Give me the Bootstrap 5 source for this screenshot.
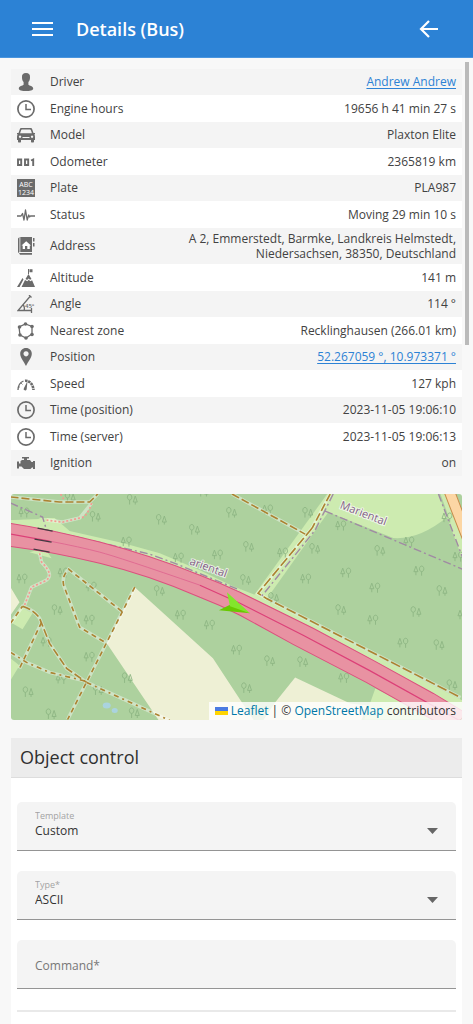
<!DOCTYPE html>
<html lang="en">
<head>
<meta charset="utf-8">
<meta name="viewport" content="width=device-width, initial-scale=1">
<title>Details (Bus)</title>
<link href="https://cdn.jsdelivr.net/npm/bootstrap@5.3.0/dist/css/bootstrap.min.css" rel="stylesheet">
<style>
  body { font-family: "Open Sans", sans-serif; font-size: 12px; line-height: 15px; color: #424242; background: #f8f8f8; }
  .topbar { height: 58px; background: #2c82d5; border-bottom: 1px solid #4a95de; padding: 0 32px; }
  .topbar h1 { font-size: 18px; line-height: 24px; font-weight: 600; padding-left: 23px; }
  .icon-btn { line-height: 0; }
  .scroller { scrollbar-width: none; padding: 11px 11px 0; }
  .scroller::-webkit-scrollbar { display: none; }
  .thumb { width: 4px; height: 283px; right: 4px; top: 4px; background: #bababa; }
  .facts tr { height: 26px; background: #f4f4f4; }
  .facts tr:nth-child(even) { height: 27px; background: #fff; }
  .facts tr.tall { height: 36px; }
  .facts td, .facts th { padding: 0 0 1px; font-weight: 400; vertical-align: middle; }
  .facts th { width: 128px; padding-left: 39px; position: relative; white-space: nowrap; }
  .facts th svg { position: absolute; left: 6px; top: 50%; transform: translateY(-50%); width: 18px; height: 18px; fill: #6b6b6b; }
  .facts td { padding-right: 6px; text-align: right; }
  .facts .line { fill: none; stroke: #6b6b6b; }
  .facts a { color: #2c82d5; text-underline-offset: 2px; }
  .map { aspect-ratio: 2 / 1; border-radius: 3px; margin-top: 18px; background: #add19e; }
  .credit { background: rgba(255,255,255,.8); padding: 1px 6px 2px 6px; color: #333; }
  .credit a { color: #0078a8; text-decoration: none; }
  .panel { margin-top: 18px; background: #fff; }
  .panel h2 { font-size: 18px; line-height: 24px; font-weight: 400; color: #303030; background: #ececec; border-bottom: 1px solid #ddd; padding: 7px 9px 8px; }
  .fields { padding: 24px 6px 21px; }
  .stack { gap: 20px; }
  .field .form-control, .field .form-select {
    height: 49px; min-height: 49px; font-size: 12px; line-height: 16px; color: #333; padding: 21px 18px 10px;
    background-color: #f4f4f4; border: 0; border-bottom: 1px solid #949494; border-radius: 5px 5px 0 0; }
  .field .form-select {
    background-image: url("data:image/svg+xml,%3Csvg xmlns='http://www.w3.org/2000/svg' viewBox='0 0 11 6'%3E%3Cpath d='M0 0h11L5.5 6z' fill='%23666'/%3E%3C/svg%3E");
    background-size: 11px 6px; background-position: right 18px top 26px; }
  .field > label { font-size: 9px; line-height: 12px; height: auto; padding: 7px 17px; color: #777; opacity: 1; transform: none !important; }
  .field > .form-control:placeholder-shown ~ label { font-size: 12px; line-height: 16px; padding-top: 17px; }
  .field > label::after { background: none !important; }
  .rule { border-top: 2px solid #e9e9e9; opacity: 1; margin-top: 21px; }
</style>
</head>
<body class="vh-100 d-flex flex-column overflow-hidden">
<header class="topbar d-flex align-items-center flex-shrink-0 text-white">
  <button type="button" class="icon-btn btn p-0 border-0" aria-label="Menu">
    <svg width="21" height="16" viewBox="0 0 21 16" stroke="#fff" stroke-width="2"><path d="M0 2h21M0 8h21M0 14h21"/></svg>
  </button>
  <h1 class="mb-0 flex-grow-1">Details (Bus)</h1>
  <button type="button" class="icon-btn btn p-0 border-0" aria-label="Back">
    <svg width="24" height="20" viewBox="0 0 24 20" fill="none" stroke="#fff" stroke-width="2.2"><path d="M21 10H4M12 2L4 10l8 8"/></svg>
  </button>
</header>

<svg class="d-none">
  <symbol id="clock" viewBox="0 0 18 18"><circle cx="9" cy="9" r="8.100" stroke-width="1.700" fill="none" stroke="#6b6b6b"/><path d="M9 4v5.600h5" stroke-width="1.500" fill="none" stroke="#6b6b6b"/></symbol>
  <symbol id="trees" viewBox="0 0 11 11" overflow="visible"><path d="M2.500 1L.5 6.500h4zM2.500 6.500V10M8.200 6.500V10.500M8.200 6.500a2.200 2.800 0 1 1 .1 0" fill="none" stroke="#8db583" stroke-width=".9"/></symbol>
  <symbol id="treesr" viewBox="0 0 11 11" overflow="visible"><path d="M8.500 2l-2 6h4zM8.500 8v2.500M2.800 6v4.500M2.800 6a2.200 2.800 0 1 1 .1 0" fill="none" stroke="#8db583" stroke-width=".9"/></symbol>
</svg>

<div class="position-relative flex-grow-1 overflow-hidden d-flex flex-column">
<main class="scroller flex-grow-1 overflow-auto d-flex flex-column">
  <table class="facts w-100 flex-shrink-0">
    <tbody>
    <tr><th scope="row"><svg viewBox="0 0 18 18"><path d="M9 0c3 0 4.300 1.500 4 4.500 0 2-.7 3.500-1.600 4.600v2.700c1 .9 4.800 1.400 4.800 3.700 0 2.300-3.500 2.500-7.200 2.500s-7.200-.2-7.200-2.500c0-2.300 3.800-2.800 4.800-3.700V9.100C5.700 8 5 6.500 5 4.500 4.700 1.500 6 0 9 0z"/></svg>Driver</th><td><a href="#">Andrew Andrew</a></td></tr>
    <tr><th scope="row"><svg><use href="#clock"/></svg>Engine hours</th><td>19656 h 41 min 27 s</td></tr>
    <tr><th scope="row"><svg viewBox="0 0 18 18"><path fill-rule="evenodd" d="M4.500 2h9c1 0 1.400.4 1.700 1.200L16.500 7H18v1l-.6.500c.5.7.6 1.500.6 2.500v3h-1v1.500c0 .7-.4 1-1 1h-1c-.7 0-1-.3-1-1V14H4v1.500c0 .7-.3 1-1 1H2c-.6 0-1-.3-1-1V14H0v-3c0-1 .1-1.800.6-2.500L0 8V7h1.500l1.300-3.800C3.100 2.400 3.500 2 4.500 2zM5 3.500c-.5 0-.7.2-.9.7L3.100 7.300h11.800l-1-3.100c-.2-.5-.4-.7-.9-.7zM3 9.500a1.200 1.200 0 1 0 .1 0zM15 9.500a1.200 1.200 0 1 0 .1 0zM5.500 11h7v1h-7z"/></svg>Model</th><td>Plaxton Elite</td></tr>
    <tr><th scope="row"><svg viewBox="0 0 18 18"><path class="line" stroke-width="1.900" d="M1 6.500h3.200v5.500H1zM8 6.500h3.200v5.500H8zM14 7.500l2.200-1V13"/></svg>Odometer</th><td>2365819 km</td></tr>
    <tr><th scope="row"><svg viewBox="0 0 18 18"><path d="M0 0h18v18H0z"/><g style="fill:#fff" font-size="7" text-anchor="middle"><text x="9" y="8">ABC</text><text x="9" y="15.500">1234</text></g></svg>Plate</th><td>PLA987</td></tr>
    <tr><th scope="row"><svg viewBox="0 0 18 18"><path class="line" stroke-width="1.300" stroke-linejoin="round" d="M0 10h4l1.500-2.500L7 14 8.500 4l1.700 10 1.500-5 1 2 .7-1H18"/></svg>Status</th><td>Moving 29 min 10 s</td></tr>
    <tr class="tall"><th scope="row"><svg viewBox="0 0 18 18"><path d="M1 1.500L2.500 0v15L1 16zM3.300 0H15v15H3.300zM2 16h13v1.800H3zM16 1h1.500v3.500H16zM16 6h1.500v3.500H16z"/><path style="fill:#fff" d="M9.200 4.300L14 8.500h-1.200V12h-2.500V9H8v3H5.700V8.500H4.500z"/></svg>Address</th><td>A 2, Emmerstedt, Barmke, Landkreis Helmstedt, Niedersachsen, 38350, Deutschland</td></tr>
    <tr><th scope="row"><svg viewBox="0 0 18 18"><path d="M11 0h1v5h-1zM12.500.2h3v3h-3zM11.500 5l3 5-1.500.8-1.500-1.300-1.300 1.500L8.500 10zM8 11l2.300 1.200 1.500-1.500 1.500 1.600 1.800-1L18 18H4.500zM5.500 9l1 1.500L2.500 18H0z"/></svg>Altitude</th><td>141 m</td></tr>
    <tr><th scope="row"><svg viewBox="0 0 18 18"><path class="line" stroke-width="1.300" d="M12 0l2.500 2.500M13 1.500L1 15.500h14M14.500 13v5M6 9.500c1.200 1.500 1.700 3.500 1.200 5.500"/><text x="8" y="12.500" font-size="6" font-weight="600">45°</text></svg>Angle</th><td>114 °</td></tr>
    <tr><th scope="row"><svg viewBox="0 0 18 18"><path class="line" stroke-width="1.300" d="M8.500 2L15 4.500V12l-6 4-6-3-1-8z"/><circle cx="8.500" cy="2" r="1.800"/><circle cx="15" cy="4.500" r="1.800"/><circle cx="15" cy="12.500" r="1.800"/><circle cx="9" cy="16" r="1.800"/><circle cx="3" cy="13" r="1.800"/><circle cx="2.500" cy="5" r="1.800"/></svg>Nearest zone</th><td>Recklinghausen (266.01 km)</td></tr>
    <tr><th scope="row"><svg viewBox="0 0 18 18"><path fill-rule="evenodd" d="M9 0c3.500 0 5.800 2.500 5.800 5.700C14.800 10 11 13.500 9 18 7 13.500 3.200 10 3.200 5.700 3.200 2.500 5.500 0 9 0zm0 3.200a2.600 2.600 0 1 0 .1 0z"/></svg>Position</th><td><a href="#">52.267059 °, 10.973371 °</a></td></tr>
    <tr><th scope="row"><svg viewBox="0 0 18 18"><path class="line" stroke-width="1.300" d="M1 15c0-4 2-7.500 5.500-9"/><path class="line" stroke-width="2.600" stroke-dasharray="2.500 .7" d="M8 5.800c4.500-.5 8 3.500 8.500 9.200"/><path class="line" stroke-width=".8" d="M4 8l1.500 1.500M1 12h2"/><path d="M10.500 6l-.8 8a1.500 1.500 0 1 1-2.700-1z"/></svg>Speed</th><td>127 kph</td></tr>
    <tr><th scope="row"><svg><use href="#clock"/></svg>Time (position)</th><td>2023-11-05 19:06:10</td></tr>
    <tr><th scope="row"><svg><use href="#clock"/></svg>Time (server)</th><td>2023-11-05 19:06:13</td></tr>
    <tr><th scope="row"><svg viewBox="0 0 18 18"><path d="M5 3h7v1.500h-2V6h3l1.500 2H16V7h2v8h-2v-1.500h-1L13.500 15H7l-2.500-2.500H2v2H0v-7h2v2h1.500V7L5 6h2V4.500H5z"/></svg>Ignition</th><td>on</td></tr>
    </tbody>
  </table>

  <section class="map position-relative overflow-hidden flex-shrink-0" aria-label="Map">
    <svg class="d-block w-100 h-100" viewBox="0 0 451 225" preserveAspectRatio="xMidYMid slice" fill="none">
      <!-- forest clearings and fields -->
      <g fill="#cdebb0">
        <path d="M0 26L26 24 44 24 59 37 112 49 149 59 189 76 222 92 245 101 264 110 451 206V225H420L229 110 90 58 0 40z"/>
        <path d="M0 12v14l30-1z" fill="#add19e"/>
        <path d="M316 0L243 101 254 107 330 0z"/>
        <path d="M319 0L314 17 382 44Q408 46 437 22L429 0zM427 0h10l14 40V65z"/>
        <path d="M11 113L22 119 12 135 0 128zM0 164L9 171 0 186zM19 58L34 54 41 64zM364 194L353 225H425z"/>
      </g>
      <g fill="#eef0d5"><path d="M124 93L202 164 229 205 243 226H148L96 149z"/><path d="M284 183L339 209 356 211 350 226H252L264 208zM0 93L9 108 0 121z"/></g>
      <g fill="#aad3df"><ellipse cx="96" cy="211" rx="4" ry="3"/><ellipse cx="104" cy="216" rx="3" ry="2.500"/></g>
      <g>
        <use href="#trees" x="8" y="13" width="11" height="11"/><use href="#treesr" x="54" y="-2" width="11" height="11"/><use href="#treesr" x="79" y="17" width="11" height="11"/><use href="#treesr" x="116" y="0" width="11" height="11"/><use href="#treesr" x="145" y="20" width="11" height="11"/><use href="#treesr" x="178" y="30" width="11" height="11"/><use href="#treesr" x="187" y="-8" width="11" height="11"/><use href="#trees" x="110" y="42" width="11" height="11"/><use href="#trees" x="162" y="58" width="11" height="11"/><use href="#trees" x="201" y="55" width="11" height="11"/><use href="#treesr" x="215" y="13" width="11" height="11"/>
        <use href="#trees" x="6" y="79" width="11" height="11"/><use href="#trees" x="47" y="73" width="11" height="11"/><use href="#trees" x="75" y="87" width="11" height="11"/><use href="#treesr" x="143" y="91" width="11" height="11"/><use href="#treesr" x="41" y="110" width="11" height="11"/><use href="#trees" x="73" y="120" width="11" height="11"/><use href="#trees" x="164" y="115" width="11" height="11"/><use href="#trees" x="193" y="125" width="11" height="11"/><use href="#trees" x="30" y="142" width="11" height="11"/><use href="#trees" x="73" y="157" width="11" height="11"/><use href="#trees" x="45" y="179" width="11" height="11"/><use href="#treesr" x="12" y="192" width="11" height="11"/><use href="#treesr" x="35" y="214" width="11" height="11"/><use href="#treesr" x="82" y="190" width="11" height="11"/><use href="#treesr" x="118" y="213" width="11" height="11"/><use href="#treesr" x="111" y="178" width="11" height="11"/>
        <use href="#trees" x="251" y="10" width="11" height="11"/><use href="#treesr" x="291" y="13" width="11" height="11"/><use href="#trees" x="324" y="26" width="11" height="11"/><use href="#treesr" x="232" y="47" width="11" height="11"/><use href="#trees" x="266" y="53" width="11" height="11"/><use href="#treesr" x="298" y="49" width="11" height="11"/><use href="#treesr" x="363" y="51" width="11" height="11"/><use href="#trees" x="392" y="42" width="11" height="11"/><use href="#trees" x="430" y="18" width="11" height="11"/><use href="#trees" x="441" y="57" width="11" height="11"/><use href="#treesr" x="229" y="80" width="11" height="11"/><use href="#trees" x="289" y="79" width="11" height="11"/><use href="#trees" x="329" y="73" width="11" height="11"/><use href="#trees" x="358" y="88" width="11" height="11"/><use href="#trees" x="402" y="71" width="11" height="11"/><use href="#treesr" x="425" y="91" width="11" height="11"/><use href="#treesr" x="257" y="98" width="11" height="11"/><use href="#treesr" x="324" y="110" width="11" height="11"/><use href="#trees" x="356" y="120" width="11" height="11"/><use href="#treesr" x="399" y="112" width="11" height="11"/><use href="#trees" x="446" y="115" width="11" height="11"/><use href="#trees" x="386" y="143" width="11" height="11"/><use href="#treesr" x="422" y="145" width="11" height="11"/><use href="#treesr" x="435" y="185" width="11" height="11"/><use href="#trees" x="220" y="150" width="11" height="11"/><use href="#treesr" x="253" y="161" width="11" height="11"/><use href="#treesr" x="286" y="162" width="11" height="11"/><use href="#trees" x="327" y="178" width="11" height="11"/><use href="#treesr" x="230" y="188" width="11" height="11"/>
      </g>
      <!-- tracks: pale casing below, brown dashes above -->
      <g stroke="#fff" stroke-opacity=".4" stroke-width="3.500">
        <path d="M124 93L57 225M111 117L58 75Q51 82 53 91L69 133 96 149M0 129L12 112Q24 116 29 124L39 149 56 174 76 188 122 209 159 226M31 128L9 174M0 158L16 168 39 178 76 187"/>
        <path d="M0 3L49 8H79L87 0M221 0L294 40M319 0L301 34 247 99 255 104 449 203M81 9L69 24 52 28 36 26M29 59L31 68Q45 82 34 87L21 93 14 111"/>
      </g>
      <g stroke="#ac8331" stroke-width="1.600">
        <path stroke-dasharray="5 4" d="M124 93L57 225M111 117L58 75Q51 82 53 91L69 133 96 149M31 128L9 174M0 129L12 112"/>
        <path stroke-dasharray="8 3" d="M12 112Q24 116 29 124L39 149 56 174 76 188M0 3L49 8H79L87 0M221 0L294 40M319 0L301 34"/>
        <path stroke-dasharray="5 4 2 4" d="M76 188L122 209 159 226M0 158L16 168 39 178 76 187"/>
        <path stroke-dasharray="10 3" d="M301 34L247 99 255 104 449 203"/>
      </g>
      <path stroke="#f59a91" stroke-width="1.700" stroke-dasharray="2 2" d="M50 0L53 5M81 9Q76 24 69 24L52 28 36 26M29 59L31 68Q45 82 34 87L21 93 14 111"/>
      <g stroke="#a08aa3" stroke-width="1.400" stroke-dasharray="8 3 2 3"><path d="M0 9L32 23 36 36 109 53 139 60 166 70 229 96M322 0L304 36 249 104M314 17L451 75M427 0L451 63"/></g>
      <!-- roads -->
      <path d="M433 -1L452 48V20L444 -1z" fill="#fcd6a4" stroke="#c78c4c"/>
      <path fill="#e892a2" stroke="#dc4f7e" d="M-2 29Q39 35 89 48T189 81Q210 89 229 98L302 134 362 166 422 199 455 219V228H426L355 188 282 150 229 121Q210 111 189 103 139 81 89 69T-2 52z"/>
      <path stroke="#dc4078" stroke-width="1.200" d="M0 40L39 47"/><path stroke="#df6790" stroke-width=".9" d="M39 47Q70 53 89 58T189 91"/><path stroke="#dc4078" stroke-width="1.200" d="M189 91L229 109 292 141 358 176 448 226"/>
      <path stroke="#443a42" stroke-width="1.300" d="M27 34L42 37M24 45L41 48M23 55L39 58"/>
      <g font-size="11" fill="#856389" stroke="#fff" stroke-opacity=".7" stroke-width="2" paint-order="stroke"><text transform="translate(328 14) rotate(21)">Mariental</text><text transform="translate(178 70) rotate(20)">ariental</text></g>
      <path fill="#68c800" d="M208 116L220 110 239 119z"/><path fill="#83e52c" d="M216 98L239 119 219 112z"/>
    </svg>
    <div class="credit position-absolute bottom-0 end-0 text-nowrap"><svg width="13" height="8" viewBox="0 0 12 8" preserveAspectRatio="none"><path fill="#4c7be1" d="M0 0h12v4H0z"/><path fill="#ffd500" d="M0 4h12v4H0z"/></svg> <a href="#">Leaflet</a> | © <a href="#">OpenStreetMap</a> contributors</div>
  </section>

  <section class="panel flex-grow-1">
    <h2 class="mb-0">Object control</h2>
    <form class="fields">
      <div class="stack d-grid">
        <div class="field form-floating">
          <select class="form-select" id="template"><option>Custom</option></select>
          <label for="template">Template</label>
        </div>
        <div class="field form-floating">
          <select class="form-select" id="type" required><option>ASCII</option></select>
          <label for="type">Type*</label>
        </div>
        <div class="field form-floating">
          <input type="text" class="form-control" id="command" placeholder="Command" required>
          <label for="command">Command*</label>
        </div>
      </div>
      <hr class="rule mb-0">
    </form>
  </section>
</main>
<div class="thumb position-absolute"></div>
</div>
<script src="https://cdn.jsdelivr.net/npm/bootstrap@5.3.0/dist/js/bootstrap.bundle.min.js"></script>
</body>
</html>
